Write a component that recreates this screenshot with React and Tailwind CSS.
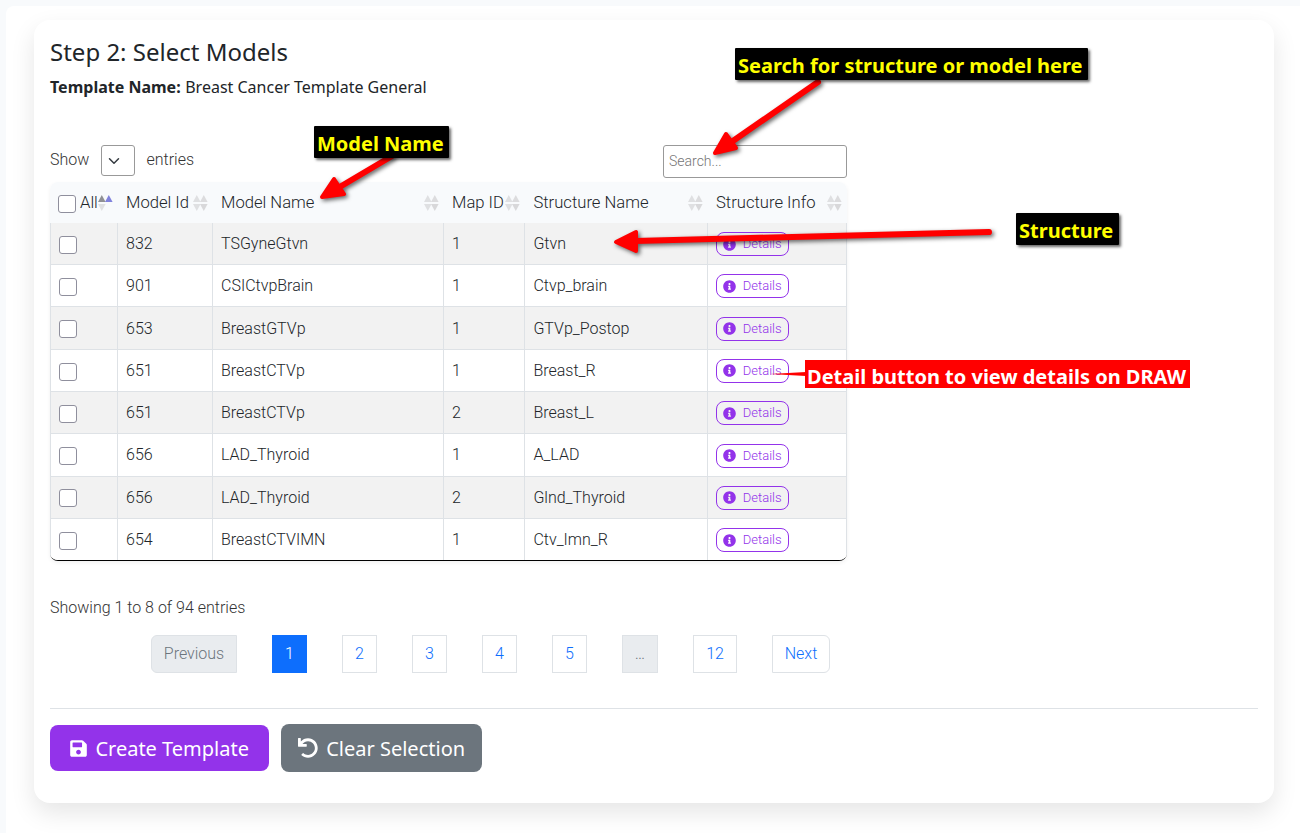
import { FaSave, FaInfoCircle, FaUndo } from "react-icons/fa";

const rows = [
  ["832", "TSGyneGtvn", "1", "Gtvn"],
  ["901", "CSICtvpBrain", "1", "Ctvp_brain"],
  ["653", "BreastGTVp", "1", "GTVp_Postop"],
  ["651", "BreastCTVp", "1", "Breast_R"],
  ["651", "BreastCTVp", "2", "Breast_L"],
  ["656", "LAD_Thyroid", "1", "A_LAD"],
  ["656", "LAD_Thyroid", "2", "Glnd_Thyroid"],
  ["654", "BreastCTVIMN", "1", "Ctv_Imn_R"],
];

const grid = "grid grid-cols-[67px_95px_231px_81.4px_182.6px_140px]";

function Sort({ active, className = "right-[4px]" }) {
  return (
    <svg className={"absolute top-[13px] h-[16px] w-[15px] " + className} viewBox="0 0 15 16">
      <path d="M0 7 L3.8 0 L7.6 7Z" fill={active ? "#8f9094" : "#dfe0e2"} />
      <path d="M0 9 L3.8 16 L7.6 9Z" fill="#dfe0e2" />
      <path d="M7 7 L10.8 0 L14.6 7Z" fill={active ? "#8082dc" : "#dcdcde"} />
      {!active && <path d="M7 9 L10.8 16 L14.6 9Z" fill="#d8d8da" />}
    </svg>
  );
}

function Box({ className = "" }) {
  return <span className={"block size-[18px] shrink-0 rounded-[3px] border border-[#8f8f9d] bg-white " + className} />;
}

function Head({ children, sort }) {
  return (
    <div className="relative flex items-center whitespace-nowrap pl-[9px] pt-[2px]">
      {children}
      <Sort className={sort} />
    </div>
  );
}

function Page({ children, className }) {
  return <span className={"flex h-[38px] items-center justify-center border border-[#dee2e6] " + className}>{children}</span>;
}

function Callout({ children, className }) {
  return (
    <div className={"absolute flex h-[32px] items-center whitespace-nowrap rounded-[1px] bg-black pl-[3px] pt-[3px] text-[20px] font-bold text-[#ffff00] shadow-[2px_2px_3px_rgba(0,0,0,0.6)] " + className}>
      {children}
    </div>
  );
}

export default function App() {
  return (
    <div className="relative h-[833px] w-[1300px] overflow-hidden bg-[#f8fafc] pl-[6px] pt-[6px] font-['Noto_Sans',sans-serif] text-[#212529]">
      <main className="h-[840px] rounded-tl-[8px] bg-white pl-[28px] pt-[14px]">
        <section className="h-[783px] w-[1240px] rounded-[16px] bg-white px-4 pt-[17px] shadow-[0_10px_24px_rgba(0,0,0,0.1)]">
          <h1 className="h-[30px] text-[24px] leading-[30px]">Step 2: Select Models</h1>
          <p className="mt-[8px] h-[24px] text-[16px] leading-[24px]">
            <b>Template Name:</b> <span className="ml-[0.4px]">Breast Cancer Template General</span>
          </p>
          <div className="mt-[46px] w-[797px] font-['Roboto',sans-serif] text-[16px] font-light">
            <div className="flex h-[37px] items-start text-[#333]">
              <span className="w-[51px] leading-[30px]">Show</span>
              <span className="flex h-[31px] w-[34px] items-center rounded-[3px] border border-[#999] pl-[6px]">
                <svg className="size-[12px]" viewBox="0 0 16 16" fill="none" stroke="#343a40" strokeWidth="2" strokeLinecap="round" strokeLinejoin="round">
                  <path d="m2 5 6 6 6-6" />
                </svg>
              </span>
              <span className="ml-[11.5px] leading-[30px]">entries</span>
              <span className="ml-auto flex h-[33px] w-[184px] items-center rounded-[3px] border border-[#999] pl-[5px] text-[14px] text-[#757575]">
                Search...
              </span>
            </div>
            <div className="overflow-hidden rounded-[8px] border-b border-black shadow-[0_2px_4px_rgba(0,0,0,0.06)]">
              <div className={grid + " h-[40.8px] bg-[#f8fafc] text-[16.64px] text-[#212529]"}>
                <div className="relative flex items-center pl-[8px]">
                  <Box className="mt-[3px]" />
                  <span className="ml-[4px] pt-[2px]">All</span>
                  <Sort active />
                </div>
                <Head>Model Id</Head>
                <Head>Model Name</Head>
                <Head>Map ID</Head>
                <Head>Structure Name</Head>
                <Head sort="right-[5px]">Structure Info</Head>
              </div>
              {rows.map((r, i) => (
                <div
                  key={i}
                  className={
                    grid +
                    " border-[#dee2e6] leading-[24px] *:border-l *:border-[#dee2e6] *:pl-[8px] *:pt-[9.15px]" +
                    (i % 2 ? " bg-white" : " bg-[#f2f2f2]") +
                    (i < 7 ? " h-[42.3px] border-b" : " h-[41.1px]")
                  }
                >
                  <div className="pt-[12.85px]!"><Box /></div>
                  <div>{r[0]}</div>
                  <div>{r[1]}</div>
                  <div>{r[2]}</div>
                  <div>{r[3]}</div>
                  <div className="border-r pt-[9.25px]!">
                    <span className="flex h-[24px] w-[73px] items-center rounded-[8px] border border-[#9333ea] pl-[6px] text-[13px] text-[#9333ea]">
                      <FaInfoCircle className="mr-[6.8px] size-[13px]" />
                      Details
                    </span>
                  </div>
                </div>
              ))}
            </div>
            <div className="mt-[35px] h-[24px] leading-[24px] text-[#333]">Showing 1 to 8 of 94 entries</div>
            <div className="ml-[101px] mt-[15px] flex gap-[35px] text-[#0d6efd]">
              <Page className="w-[86px] rounded-l-[6px] bg-[#e9ecef] text-[#6c757d]">Previous</Page>
              <Page className="w-[35px] border-[#0d6efd]! bg-[#0d6efd] text-white">1</Page>
              <Page className="w-[35px]">2</Page>
              <Page className="w-[35px]">3</Page>
              <Page className="w-[35px]">4</Page>
              <Page className="w-[35px]">5</Page>
              <Page className="w-[36px] bg-[#e9ecef] text-[#6c757d]">…</Page>
              <Page className="w-[44px]">12</Page>
              <Page className="w-[58px] rounded-r-[6px]">Next</Page>
            </div>
          </div>
          <div className="mt-[35px] h-px bg-[#dee2e6]" />
          <div className="mt-[15px] flex items-center gap-[12px] text-[20px] text-white">
            <button className="flex h-[46px] w-[219px] items-center rounded-[8px] bg-[#9333ea] pl-[19px] pt-px">
              <FaSave className="mr-[7.4px] size-[19px]" />
              <span className="pt-[2px]">Create Template</span>
            </button>
            <button className="flex h-[48px] w-[201px] items-center rounded-[8px] bg-[#6c757d] pl-[17px]">
              <FaUndo className="mr-[8.2px] size-[20px]" />
              <span className="pt-[3px]">Clear Selection</span>
            </button>
          </div>
        </section>
      </main>

      <svg className="absolute left-0 top-0 h-[833px] w-[1300px] drop-shadow-[2px_2px_2px_rgba(0,0,0,0.6)]" viewBox="0 0 1300 833" fill="#f00" stroke="#f00" strokeLinecap="round" strokeLinejoin="round">
        <path d="M392 156 L338 188" strokeWidth="6" />
        <path d="M322 197 L334 179 L344 194Z" strokeWidth="4" />
        <path d="M818 82 L730 143" strokeWidth="6" />
        <path d="M715 153 L726 134 L736 148Z" strokeWidth="4" />
        <path d="M989 232 L635 241" strokeWidth="6" />
        <path d="M616 242 L636 232 L636 251Z" strokeWidth="4" />
      </svg>
      <svg className="absolute left-[770px] top-[370px] h-[8px] w-[36px]" viewBox="0 0 36 8">
        <path d="M0 4 L36 2 L36 6Z" fill="#f00" />
      </svg>
      <Callout className="left-[314px] top-[126px] w-[135px]">Model Name</Callout>
      <Callout className="left-[735px] top-[48px] w-[353px]">Search for structure or model here</Callout>
      <Callout className="left-[1016px] top-[213px] w-[103px]">Structure</Callout>
      <div className="absolute left-[805px] top-[360px] flex h-[28px] w-[385px] items-center whitespace-nowrap bg-[#f00] pl-[2px] pt-[5px] text-[20px] font-bold text-white">
        Detail button to view details on DRAW
      </div>
    </div>
  );
}
